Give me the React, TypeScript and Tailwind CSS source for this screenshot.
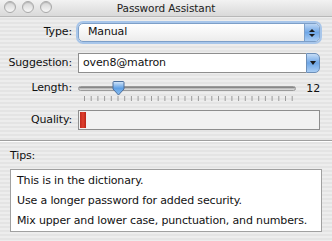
import React from "react";

const ticks = Array.from({ length: 32 }, (_, i) => 84 + i * 6.7);

export default function App() {
  return (
    <div
      className="relative w-[332px] h-[241px] overflow-hidden text-[11px] tracking-[-0.15px] text-[#111] bg-[repeating-linear-gradient(180deg,#ededed_0px,#ededed_2px,#e4e4e4_2px,#e4e4e4_4px)]"
      style={{ fontFamily: '"DejaVu Sans", "Liberation Sans", sans-serif' }}
    >
      {/* Title bar */}
      <div className="relative h-[17px] flex items-center justify-center bg-gradient-to-b from-[#f2f2f2] to-[#d9d9d9] border-b border-[#b8b8b8]">
        <div className="absolute left-[4px] top-[1px] flex gap-[6px]">
          {[0, 1, 2].map((i) => (
            <div
              key={i}
              className="w-[12px] h-[12px] rounded-full border border-[#a9a9a9] bg-gradient-to-b from-[#d4d4d4] to-[#f7f7f7] shadow-[inset_0_1px_1px_rgba(0,0,0,0.15)]"
            />
          ))}
        </div>
        <span className="text-[10.5px] tracking-[-0.1px] text-[#222] leading-none">Password Assistant</span>
      </div>

      {/* Form */}
      <div className="grid grid-cols-[72px_1fr] gap-x-[6px] pr-[12px] pt-[6px]">
        {/* Type */}
        <div className="flex items-center justify-end h-[19px]">Type:</div>
        <div className="h-[19px] rounded-[5px] border border-[#7d9fc8] shadow-[0_0_0_2px_#a8c6ea] bg-gradient-to-b from-white to-[#ececec] flex items-center overflow-hidden">
          <span className="pl-[9px] flex-1">Manual</span>
          <div className="w-[15px] h-full bg-gradient-to-b from-[#bcd6f4] via-[#6ea6e6] to-[#a9cdf4] border-l border-[#7d9fc8] flex flex-col items-center justify-center gap-[2px]">
            <svg width="6" height="3" viewBox="0 0 6 3"><path d="M0 3 L3 0 L6 3 Z" fill="#1a1a1a" /></svg>
            <svg width="6" height="3" viewBox="0 0 6 3"><path d="M0 0 L3 3 L6 0 Z" fill="#1a1a1a" /></svg>
          </div>
        </div>

        {/* Suggestion */}
        <div className="flex items-center justify-end h-[20px] mt-[11px]">Suggestion:</div>
        <div className="h-[20px] mt-[11px] flex">
          <div className="flex-1 bg-white border border-[#8e8e8e] border-r-0 flex items-center pl-[4px]">oven8@matron</div>
          <div className="w-[14px] h-full rounded-r-[5px] bg-gradient-to-b from-[#c4dcf6] via-[#6ea6e6] to-[#a9cdf4] border border-[#6d8fb8] flex items-center justify-center">
            <svg width="6" height="4" viewBox="0 0 6 4"><path d="M0 0 L3 4 L6 0 Z" fill="#1a1a1a" /></svg>
          </div>
        </div>

        {/* Length */}
        <div className="flex items-center justify-end h-[16px] mt-[7px]">Length:</div>
        <div className="relative h-[22px] mt-[7px] flex">
          <div className="relative w-[218px] h-full">
            <div className="absolute left-0 right-0 top-[6px] h-[5px] rounded-full bg-gradient-to-b from-[#6f6f6f] via-[#bdbdbd] to-[#e3e3e3] border border-[#9a9a9a]" />
            <svg className="absolute left-[33px] top-[1px]" width="15" height="15" viewBox="0 0 15 15">
              <defs>
                <linearGradient id="th" x1="0" y1="0" x2="0" y2="1">
                  <stop offset="0" stopColor="#d6e8fb" />
                  <stop offset="0.5" stopColor="#5f9fe3" />
                  <stop offset="1" stopColor="#8cc0f2" />
                </linearGradient>
              </defs>
              <path d="M2 1.5 Q2 0.5 3 0.5 L12 0.5 Q13 0.5 13 1.5 L13 8 L7.5 14 L2 8 Z" fill="url(#th)" stroke="#4c6f9c" strokeWidth="1" />
            </svg>
            <svg className="absolute left-0 top-[16px]" width="218" height="6" viewBox="0 0 218 6">
              {ticks.map((x, i) => (
                <line key={i} x1={x - 78 + 0.5} y1="0" x2={x - 78 + 0.5} y2="5" stroke="#9a9a9a" strokeWidth="1" />
              ))}
            </svg>
          </div>
          <div className="flex-1 flex justify-end leading-none pt-[3px]">12</div>
        </div>

        {/* Quality */}
        <div className="flex items-center justify-end h-[20px] mt-[8px]">Quality:</div>
        <div className="h-[20px] mt-[8px] border border-[#8e8e8e] bg-[#f2f2f2] flex p-[1px]">
          <div className="w-[6px] h-full bg-gradient-to-r from-[#c0281c] via-[#e0402e] to-[#b82418]" />
        </div>
      </div>

      {/* Separator */}
      <div className="mt-[10px] h-[2px] border-t border-[#9f9f9f] border-b-white border-b" />

      {/* Tips */}
      <div className="px-[10px] pt-[8px]">
        <div className="leading-none">Tips:</div>
        <div className="mt-[8px] h-[63px] bg-white border border-[#a0a0a0] pl-[6px] pt-[3px] flex flex-col gap-[5px] leading-[15px]">
          <div>This is in the dictionary.</div>
          <div>Use a longer password for added security.</div>
          <div>Mix upper and lower case, punctuation, and numbers.</div>
        </div>
      </div>
    </div>
  );
}
